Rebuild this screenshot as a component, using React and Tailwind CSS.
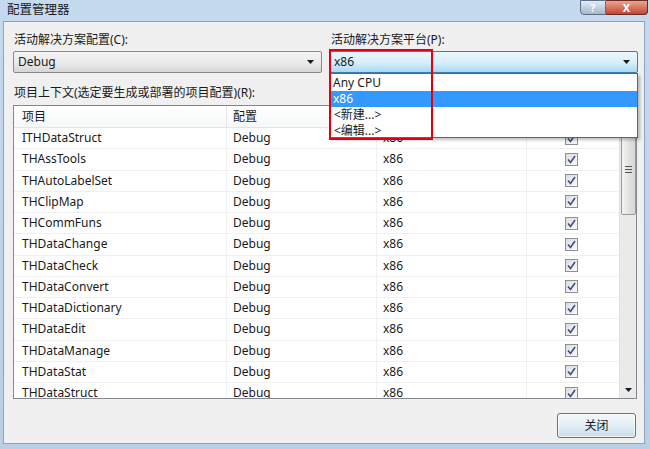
import React from 'react'

const rows = [
  'ITHDataStruct',
  'THAssTools',
  'THAutoLabelSet',
  'THClipMap',
  'THCommFuns',
  'THDataChange',
  'THDataCheck',
  'THDataConvert',
  'THDataDictionary',
  'THDataEdit',
  'THDataManage',
  'THDataStat',
  'THDataStruct',
]

const font = { fontFamily: '"Noto Sans", "Noto Sans CJK SC", sans-serif' }

const Arrow = () => (
  <svg width="7" height="4" viewBox="0 0 7 4">
    <path d="M0 0H7L3.5 4Z" fill="#1a1a1a" />
  </svg>
)

const CheckBox = () => (
  <div className="w-[13px] h-[13px] border border-[#8f8f8f] bg-gradient-to-br from-[#dcdcdc] to-[#fbfbfb] flex items-center justify-center">
    <svg width="9" height="9" viewBox="0 0 9 9">
      <path d="M1 4.5L3.5 7.5L8 1" stroke="#3b4f8c" strokeWidth="1.6" fill="none" />
    </svg>
  </div>
)

export default function App() {
  return (
    <div
      className="w-[650px] h-[449px] flex flex-col bg-gradient-to-b from-[#c5d9ef] to-[#b9cfe6] text-[12px] text-[#1a1a1a] overflow-hidden"
      style={font}
    >
      {/* title bar */}
      <div className="h-[21px] flex items-start justify-between shrink-0">
        <span className="pl-[7px] pt-[1px] text-[12.5px] text-[#1a1a1a]">配置管理器</span>
        <div className="flex mr-[2px]">
          <div className="w-[26px] h-[15px] border border-[#5d6e86] rounded-bl-[4px] bg-gradient-to-b from-[#e3ebf4] to-[#a8b8cc] flex items-center justify-center text-[10px] font-bold text-white leading-none">
            ?
          </div>
          <div className="w-[42px] h-[15px] border border-l-0 border-[#6b2a22] rounded-br-[4px] bg-gradient-to-b from-[#e8a596] to-[#c2432c] flex items-center justify-center text-[11px] font-bold text-white leading-none">
            X
          </div>
        </div>
      </div>

      {/* client */}
      <div className="flex-1 ml-[3px] mr-[5px] mb-[5px] border border-[#8ba3bf] bg-[#f0f0f0] flex flex-col pl-[9px] pr-[6px] pt-[9px]">
        <div className="flex gap-[8px]">
          <div className="w-[309px] flex flex-col">
            <span className="h-[17px] leading-[17px] pl-[1px]">活动解决方案配置(C):</span>
            <div className="mt-[3px] h-[22px] border border-[#8a8a8a] rounded-[2px] bg-gradient-to-b from-[#f3f3f3] via-[#ebebeb] to-[#d6d6d6] flex items-center justify-between pl-[4px] pr-[7px]">
              <span>Debug</span>
              <Arrow />
            </div>
          </div>
          <div className="flex-1 flex flex-col relative">
            <span className="h-[17px] leading-[17px] pl-[1px]">活动解决方案平台(P):</span>
            <div className="mt-[3px] h-[22px] border border-[#3c7fb1] rounded-[2px] bg-gradient-to-b from-[#eaf6fd] via-[#d9f0fc] to-[#a7d9f5] flex items-center justify-between pl-[3px] pr-[7px]">
              <span>x86</span>
              <Arrow />
            </div>
            {/* dropdown list */}
            <div className="absolute left-0 right-0 top-[42px] h-[65px] bg-white border border-[#646464] shadow-[2px_2px_3px_rgba(0,0,0,0.25)] flex flex-col pt-[1px] z-10">
              <div className="h-[16px] leading-[16px] pl-[2px]">Any CPU</div>
              <div className="h-[16px] leading-[16px] pl-[2px] bg-[#3399ff] text-white">x86</div>
              <div className="h-[16px] leading-[16px] pl-[3px]">&lt;新建...&gt;</div>
              <div className="h-[16px] leading-[16px] pl-[3px]">&lt;编辑...&gt;</div>
            </div>
            {/* highlight box */}
            <div className="absolute left-[-1px] top-[18px] w-[104px] h-[91px] border-2 border-[#e3000f] z-20" />
          </div>
        </div>

        <span className="mt-[11px] h-[17px] leading-[17px] pl-[1px]">项目上下文(选定要生成或部署的项目配置)(R):</span>

        <div className="mt-[4px] w-[624px] h-[294px] border border-[#828790] bg-white flex overflow-hidden">
          <div className="flex-1 flex flex-col">
            <div className="h-[22px] shrink-0 flex border-b border-[#e5e5e5] bg-gradient-to-b from-white to-[#f7f8f9]">
              <div className="w-[213px] pl-[8px] flex items-center border-r border-[#e5e5e5]">项目</div>
              <div className="w-[150px] pl-[6px] flex items-center border-r border-[#e5e5e5]">配置</div>
              <div className="w-[150px] border-r border-[#e5e5e5]" />
              <div className="flex-1" />
            </div>
            {rows.map((name) => (
              <div key={name} className="h-[21.25px] shrink-0 flex border-b border-[#f0f0f0]">
                <div className="w-[213px] pl-[8px] flex items-center border-r border-[#f0f0f0]">{name}</div>
                <div className="w-[150px] pl-[6px] flex items-center border-r border-[#f0f0f0]">Debug</div>
                <div className="w-[150px] pl-[6px] flex items-center border-r border-[#f0f0f0]">x86</div>
                <div className="flex-1 pl-[38px] flex items-center">
                  <CheckBox />
                </div>
              </div>
            ))}
          </div>
          {/* scrollbar */}
          <div className="w-[17px] shrink-0 bg-[#eaeaea] border-l border-[#e0e0e0] flex flex-col items-center">
            <div className="h-[17px] w-full flex items-center justify-center">
              <svg width="7" height="4" viewBox="0 0 7 4">
                <path d="M0 4H7L3.5 0Z" fill="#606060" />
              </svg>
            </div>
            <div className="mt-[1px] w-[15px] h-[91px] border border-[#9a9a9a] rounded-[2px] bg-gradient-to-r from-[#f3f3f3] to-[#d5d5d5] flex flex-col items-center justify-center gap-[2px]">
              <div className="w-[7px] h-px bg-[#555]" />
              <div className="w-[7px] h-px bg-[#555]" />
              <div className="w-[7px] h-px bg-[#555]" />
            </div>
            <div className="flex-1" />
            <div className="h-[17px] w-full flex items-center justify-center">
              <Arrow />
            </div>
          </div>
        </div>

        <div className="mt-[14px] flex justify-end pr-[2px]">
          <div className="w-[79px] h-[25px] border border-[#3c7fb1] rounded-[3px] bg-gradient-to-b from-[#f2f8fc] via-[#e4eff6] to-[#c9dbe7] shadow-[inset_0_0_0_1px_rgba(255,255,255,0.7)] flex items-center justify-center">
            关闭
          </div>
        </div>
      </div>
    </div>
  )
}
